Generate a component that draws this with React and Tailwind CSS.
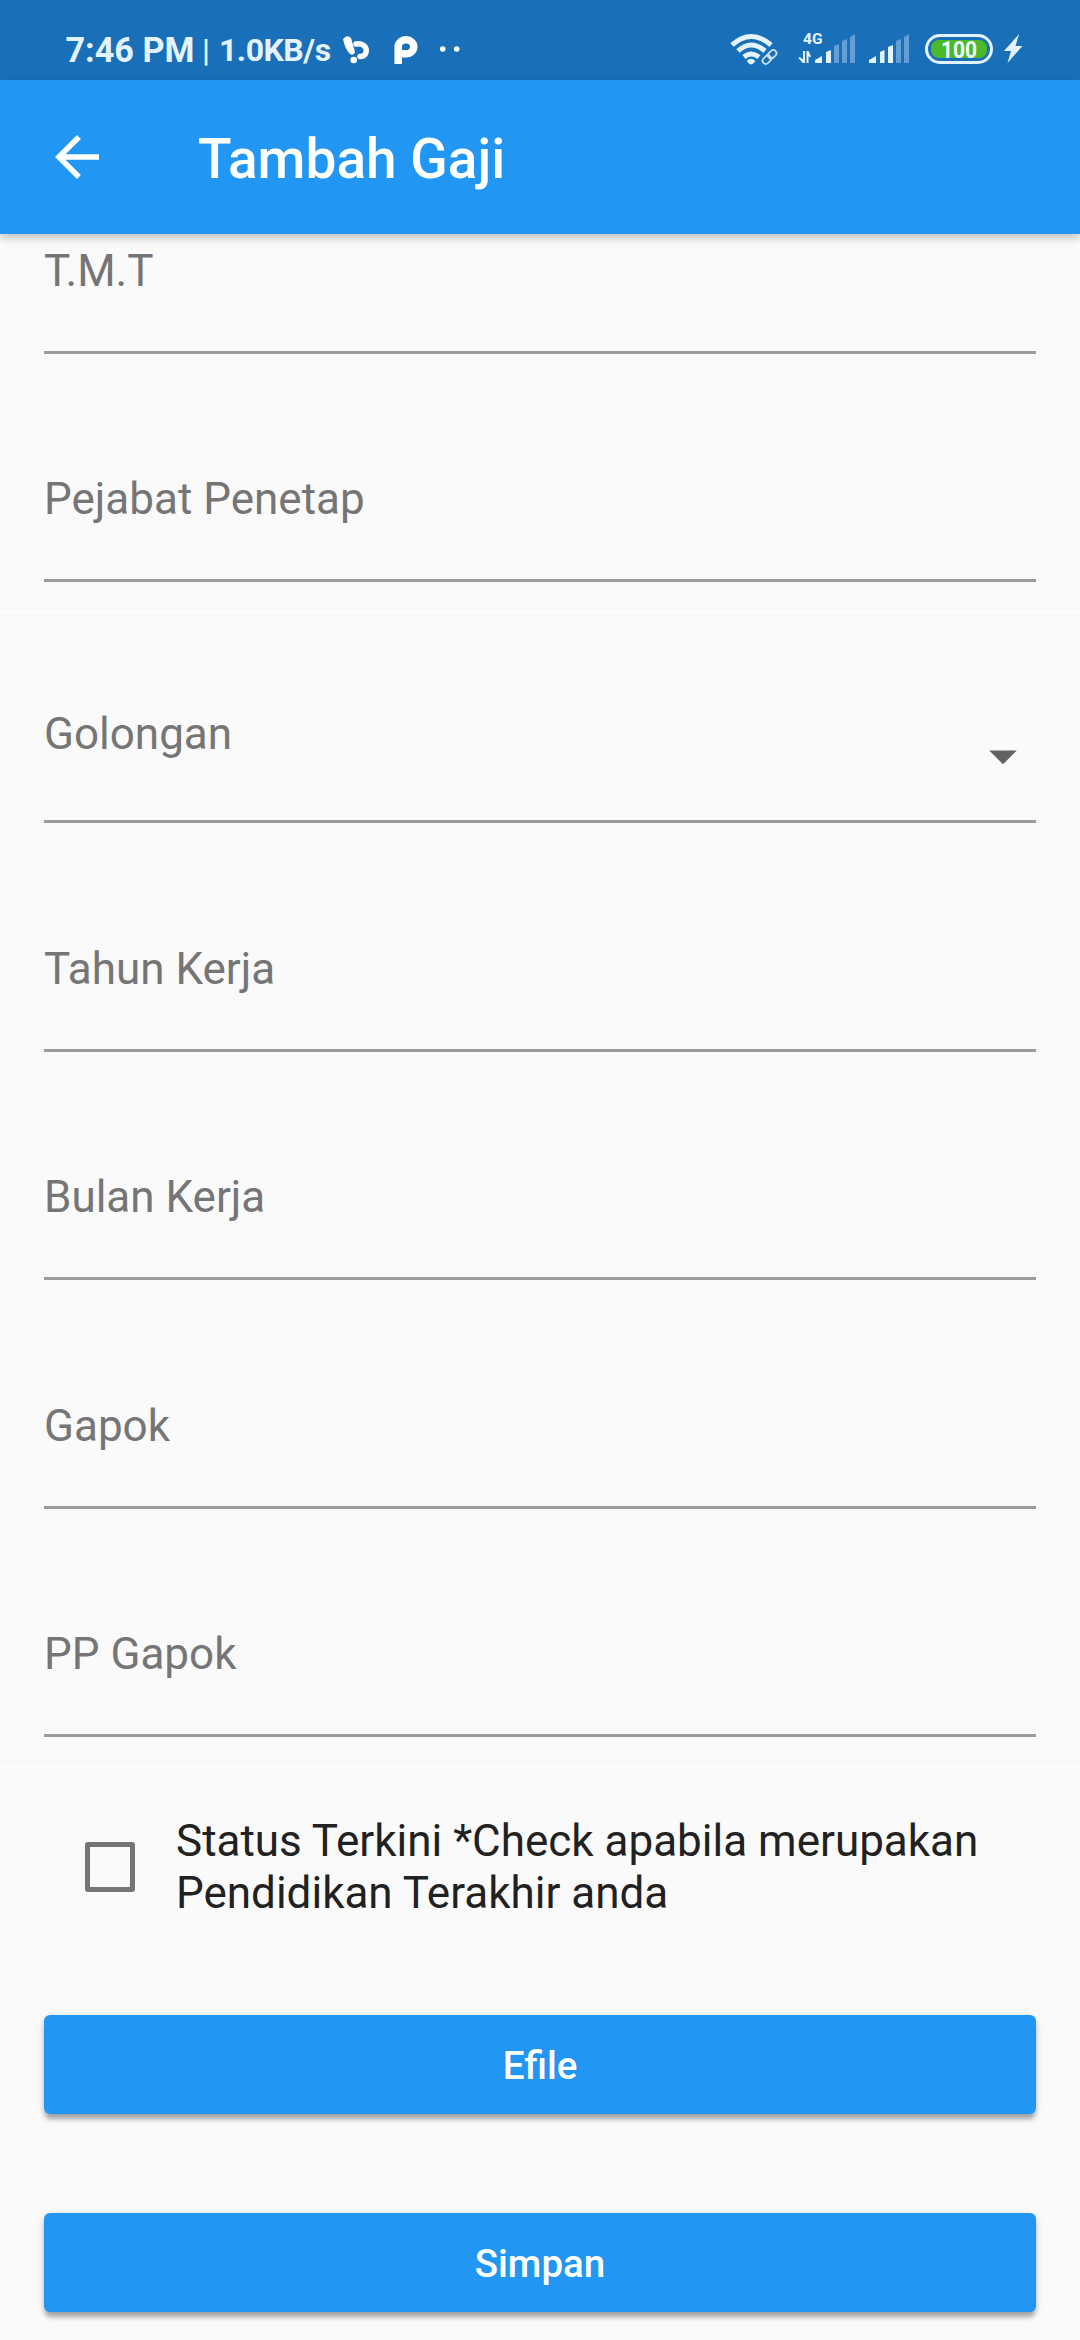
const fields = [
  { label: 'T.M.T', item: 'h-[151px]', field: 'h-[109px]' },
  { label: 'Pejabat Penetap', item: 'h-[228px]', field: 'h-[109px]' },
  { label: 'Golongan', item: 'h-[241px]', field: 'h-[115px]', select: true },
  { label: 'Tahun Kerja', item: 'h-[229px]', field: 'h-[109px]' },
  { label: 'Bulan Kerja', item: 'h-[228px]', field: 'h-[109px]' },
  { label: 'Gapok', item: 'h-[229px]', field: 'h-[109px]' },
  { label: 'PP Gapok', item: 'h-[228px]', field: 'h-[109px]' },
];

function StatusIcons() {
  return (
    <svg width="300" height="80" viewBox="725 0 300 80" fill="#e3f3ff">
      <g fill="none" stroke="#e3f3ff" strokeWidth="5">
        <path d="M732 45 Q751 28 771 45" />
        <path d="M738 51 Q751 39 765 51" />
        <path d="M744 57 Q751 51 759 57" />
      </g>
      <path d="M747 60.500 Q751 57 755 60.500 Q755 63 751 64.500 Q747 63 747 60.500Z" />
      <g fill="none" stroke="#cfe6fa" strokeWidth="1.700" transform="rotate(-45 769.5 57)">
        <rect x="761" y="53.8" width="9.500" height="6.400" rx="3.200" />
        <rect x="768.500" y="53.8" width="9.500" height="6.400" rx="3.200" />
      </g>
      <text x="803" y="44" fontFamily="Roboto" fontWeight="700" fontSize="15.5" textLength="19.500" lengthAdjust="spacingAndGlyphs">4G</text>
      <path d="M805 51v12h-2.200l-4.500-5 1.500-1 3.200 2.500V51zM806.500 63V51h2l2.500 5.500-1 1-1.500-1.500v7z" />
      <path d="M815 63v-3l7-4v7zM826 63V52l5-2v13z" />
      <path d="M834 63V46l5-2v19zM842 63V41l5-2v24zM850 63V37l5-3v29z" fill="#639fd6" />
      <path d="M869 63v-3l7-4v7zM880 63V52l4.500-2v13zM888 63V47l5-2v18z" />
      <path d="M896 63V41l5-2v24zM904 63V37l5-3v29z" fill="#639fd6" />
      <rect x="926.500" y="35.500" width="65" height="27" rx="13.500" fill="none" stroke="#e3f3ff" strokeWidth="3" />
      <rect x="931" y="40" width="56" height="18" rx="8" fill="#4cba28" />
      <text x="941" y="58" fontFamily="Roboto" fontWeight="700" fontSize="24" textLength="36" lengthAdjust="spacingAndGlyphs" fill="#f3fbff">100</text>
      <path d="M1019 34l-15 17h7l-3.500 12 15-17h-7z" />
    </svg>
  );
}

function StatusBar() {
  return (
    <div className="flex h-20 shrink-0 justify-between bg-[#1a70b8] pr-[55px] pl-[65.5px] text-[#e3f3ff]">
      <div className="flex pt-[29px] font-bold leading-[42px]">
        <span className="w-[136.5px] text-[34.2px] whitespace-nowrap">7:46 PM</span>
        <span className="w-[17px] text-[32px] font-medium">|</span>
        <span className="w-[120px] text-[32px] tracking-[-0.5px] whitespace-nowrap">1.0KB/s</span>
        <svg width="130" height="40" viewBox="339 29 130 40" className="shrink-0">
          <path d="M343 39q4-5 8-1l4 14q-1 4-5 2-5-5-7-15z" fill="#fff" />
          <path d="M356 44C369 42 369 57 360 56.500" fill="none" stroke="#fff" strokeWidth="5.500" strokeLinecap="round" />
          <circle cx="353.700" cy="60" r="3.300" fill="#fff" />
          <path d="M398.200 64V46a7.800 7 0 1 1 7.800 7.800H400" fill="none" stroke="#fff" strokeWidth="7.500" />
          <circle cx="442.700" cy="49" r="2.800" fill="#fff" />
          <circle cx="456.700" cy="49" r="2.800" fill="#fff" />
        </svg>
      </div>
      <StatusIcons />
    </div>
  );
}

function FormField({ label, item, field, select }) {
  return (
    <div className={`flex flex-col justify-end border-b-2 border-[#fdfdfd] px-11 pb-[29px] ${item}`}>
      <div className={`flex justify-between border-b-[3px] border-[#9b9b9b] ${field}`}>
        <label className="text-[44px] leading-[52px] text-[#757575]">{label}</label>
        {select && (
          <svg width="66" height="66" viewBox="0 0 24 24" className="mt-[14.5px]">
            <path d="M7 10l5 5 5-5z" fill="#616161" />
          </svg>
        )}
      </div>
    </div>
  );
}

function ActionButton({ children }) {
  return (
    <button className="mx-11 flex h-[99px] shrink-0 items-center justify-center rounded-[6px] bg-[#2196f3] pt-[3px] text-[38.5px] font-medium text-white shadow-[0_6px_5px_-1px_rgba(0,0,0,0.3),0_2px_8px_0_rgba(0,0,0,0.12)]">
      {children}
    </button>
  );
}

export default function App() {
  return (
    <div className="flex h-[2340px] w-[1080px] flex-col overflow-hidden bg-[#fafafa] font-['Roboto',sans-serif]">
      <StatusBar />
      <header className="relative flex h-[154px] shrink-0 items-center bg-[#2196f3] pl-11 text-white shadow-[0_4px_8px_rgba(0,0,0,0.22)]">
        <svg width="66" height="66" viewBox="0 0 24 24" fill="currentColor">
          <path d="M20 11H7.830l5.590-5.590L12 4l-8 8 8 8 1.410-1.410L7.830 13H20v-2z" />
        </svg>
        <h1 className="mt-1 ml-[88px] text-[55px] leading-[64px] font-medium">Tambah Gaji</h1>
      </header>
      <main className="flex flex-col">
        {fields.map((f) => (
          <FormField key={f.label} {...f} />
        ))}
        <div className="flex h-[198px] items-start border-b-2 border-[#fdfdfd] pt-[47px] pl-[85px]">
          <span className="mt-[27px] size-[50px] rounded-[3px] border-[5.5px] border-[#757575]" />
          <p className="ml-[41px] text-[44px] leading-[52px] text-[#212121]">
            Status Terkini *Check apabila merupakan
            <br />
            Pendidikan Terakhir anda
          </p>
        </div>
        <div className="flex h-[198px] flex-col border-b-2 border-[#fdfdfd] pt-[49px]">
          <ActionButton>Efile</ActionButton>
        </div>
        <div className="flex h-[176px] flex-col pt-[49px]">
          <ActionButton>Simpan</ActionButton>
        </div>
      </main>
    </div>
  );
}
